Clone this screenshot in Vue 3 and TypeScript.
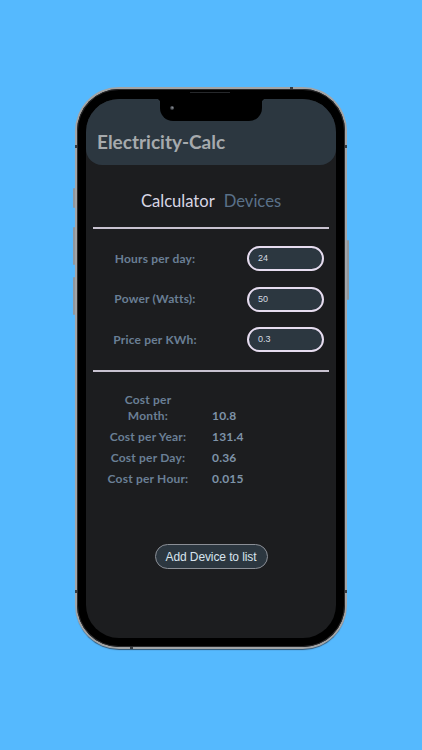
<script setup lang="ts">
const inputs = [
  { label: 'Hours per day:', value: '24' },
  { label: 'Power (Watts):', value: '50' },
  { label: 'Price per KWh:', value: '0.3' },
]
const results = [
  { label: 'Cost per Month:', value: '10.8' },
  { label: 'Cost per Year:', value: '131.4' },
  { label: 'Cost per Day:', value: '0.36' },
  { label: 'Cost per Hour:', value: '0.015' },
]
</script>

<template>
  <div class="page">
    <div class="phone">
      <span class="side side-l1"></span>
      <span class="side side-l2"></span>
      <span class="side side-l3"></span>
      <span class="side side-r"></span>
      <span class="band band-top"></span>
      <span class="band band-bottom"></span>
      <span class="band band-lt"></span>
      <span class="band band-rt"></span>
      <span class="band band-lb"></span>
      <span class="band band-rb"></span>
      <div class="bezel">
        <span class="speaker"></span>
        <div class="screen">
          <header class="appbar">
            <div class="notch"><span class="camera"></span></div>
            <h1 class="title">Electricity-Calc</h1>
          </header>
          <nav class="tabs">
            <span class="tab active">Calculator</span>
            <span class="tab">Devices</span>
          </nav>
          <div class="rule"></div>
          <section class="inputs">
            <div v-for="row in inputs" :key="row.label" class="input-row">
              <span class="label">{{ row.label }}</span>
              <div class="field">{{ row.value }}</div>
            </div>
          </section>
          <div class="rule"></div>
          <section class="results">
            <div v-for="row in results" :key="row.label" class="result-row">
              <span class="label result-label">{{ row.label }}</span>
              <span class="value">{{ row.value }}</span>
            </div>
          </section>
          <div class="action">
            <button class="add" type="button">Add Device to list</button>
          </div>
        </div>
      </div>
    </div>
  </div>
</template>

<style>
html, body { margin: 0; background: #55b9fe; }
</style>

<style scoped>
.page {
  width: 422px;
  height: 750px;
  background: #55b9fe;
  padding-top: 87px;
  box-sizing: border-box;
  overflow: hidden;
}
.phone {
  position: relative;
  width: 272px;
  height: 562px;
  margin-left: 75px;
  border-radius: 44px;
  box-sizing: border-box;
  padding: 2px;
  background: #a2a4a6;
  box-shadow: 0 2px 1px -1px rgba(40, 60, 80, 0.8);
}
.side {
  position: absolute;
  width: 2px;
  background: #8f979e;
  border-radius: 1px;
}
.side-l1 { left: -2px; top: 101px; height: 20px; }
.side-l2 { left: -2px; top: 140px; height: 38px; }
.side-l3 { left: -2px; top: 190px; height: 38px; }
.side-r { right: -2px; top: 153px; height: 60px; }
.band {
  position: absolute;
  background: #3b3d40;
}
.band-top { left: 215px; top: 0; width: 3px; height: 2px; }
.band-bottom { left: 55px; bottom: 0; width: 3px; height: 2px; }
.band-lt { left: 0; top: 58px; width: 2px; height: 3px; }
.band-rt { right: 0; top: 58px; width: 2px; height: 3px; }
.band-lb { left: 0; bottom: 56px; width: 2px; height: 3px; }
.band-rb { right: 0; bottom: 56px; width: 2px; height: 3px; }
.bezel {
  position: relative;
  height: 100%;
  box-sizing: border-box;
  padding: 10px 9px 9px;
  background: #000;
  border-radius: 42px;
  box-shadow: inset 0 0 0 1px #2a2a2c;
}
.speaker {
  position: absolute;
  left: 113px;
  top: 3px;
  width: 40px;
  height: 1px;
  background: #26282b;
}
.screen {
  height: 100%;
  display: flex;
  flex-direction: column;
  background: #1c1d1f;
  border-radius: 33px;
  overflow: hidden;
}
.appbar {
  position: relative;
  height: 66px;
  flex: none;
  display: flex;
  align-items: flex-end;
  box-sizing: border-box;
  padding: 0 11px 11px;
  background: #2c3740;
  border-radius: 0 0 16px 16px;
}
.notch {
  position: absolute;
  left: 74px;
  top: 0;
  width: 102px;
  height: 22px;
  background: #000;
  border-radius: 0 0 13px 13px;
}
.notch::before,
.notch::after {
  content: "";
  position: absolute;
  top: 0;
  width: 4px;
  height: 4px;
}
.notch::before {
  left: -4px;
  background: radial-gradient(circle at 0 100%, transparent 4px, #000 4.5px);
}
.notch::after {
  right: -4px;
  background: radial-gradient(circle at 100% 100%, transparent 4px, #000 4.5px);
}
.camera {
  position: absolute;
  left: 10px;
  top: 7px;
  width: 4px;
  height: 4px;
  border-radius: 50%;
  background: radial-gradient(circle at 60% 40%, #8a8f96 0, #2b2e33 70%);
}
.title {
  margin: 0;
  font: 700 19px/24px Lato, sans-serif;
  color: #a6aaad;
}
.tabs {
  display: flex;
  justify-content: center;
  gap: 9px;
  height: 62px;
  align-items: flex-end;
  padding-bottom: 16px;
  box-sizing: border-box;
  flex: none;
}
.tab {
  font: 400 16.6px/20px Lato, sans-serif;
  color: #5a7189;
}
.tab.active { color: #d8d6e4; }
.rule {
  height: 2px;
  margin: 0 7px;
  background: #c8c2d0;
  flex: none;
}
.inputs {
  display: flex;
  flex-direction: column;
  gap: 15.4px;
  padding: 17px 12px 18px 0;
  flex: none;
}
.input-row {
  display: flex;
  align-items: center;
  justify-content: space-between;
}
.label {
  font: 700 12px/16px Lato, sans-serif;
  letter-spacing: 0.2px;
  color: #6a7f95;
  text-align: center;
}
.input-row .label {
  width: 138px;
}
.field {
  width: 77px;
  height: 25.2px;
  box-sizing: border-box;
  padding-left: 9px;
  border: 2px solid #e6dcef;
  border-radius: 13px;
  background: #2c3740;
  color: #d5dbe0;
  font: 400 9px/21.2px "Liberation Sans", sans-serif;
}
.results {
  display: flex;
  flex-direction: column;
  gap: 5px;
  padding-top: 20px;
  flex: none;
}
.result-row {
  display: flex;
  align-items: flex-end;
}
.result-label {
  width: 84px;
  margin-left: 20px;
}
.value {
  margin-left: 22px;
  font: 700 12px/16px Lato, sans-serif;
  color: #7e93a8;
  letter-spacing: 0.2px;
}
.action {
  display: flex;
  justify-content: center;
  padding-top: 57px;
}
.add {
  width: 113px;
  height: 25px;
  padding: 0;
  border: 1px solid #8b8f96;
  border-radius: 13px;
  background: #2c3740;
  color: #d8e4ee;
  letter-spacing: -0.1px;
  font: 400 12px/22px "Liberation Sans", sans-serif;
}
</style>
